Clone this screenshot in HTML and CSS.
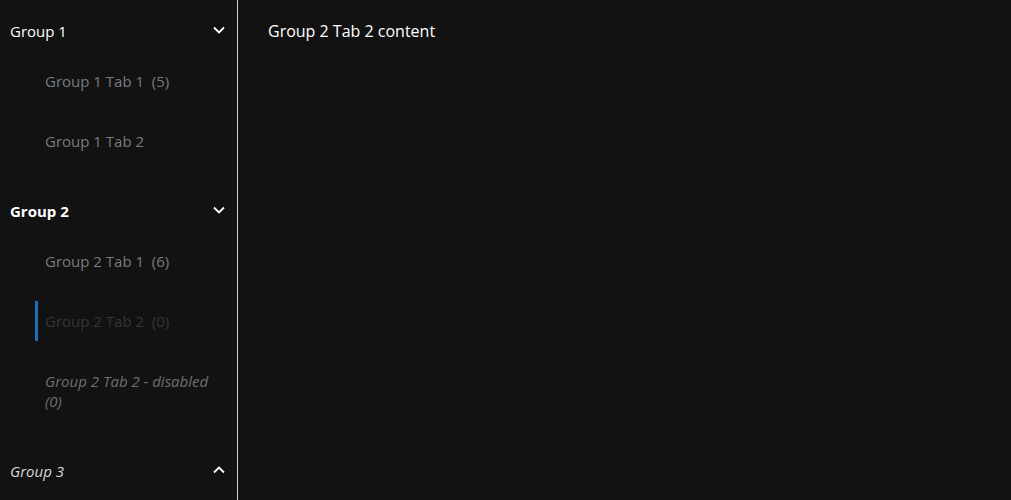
FILE: index.html
```html
<!DOCTYPE html>
<html>
<head>
<meta charset="utf-8">
<link rel="stylesheet" href="styles.css">
</head>
<body>
<div class="app">
  <nav class="sidebar">
    <section class="group">
      <div class="group-header">
        <span class="group-title">Group 1</span>
        <svg class="chev" width="12" height="8" viewBox="0 0 12 8"><path d="M1 1.5 L6 6.5 L11 1.5" fill="none" stroke="#fff" stroke-width="1.8"/></svg>
      </div>
      <div class="tab"><span>Group 1 Tab 1&nbsp; (5)</span></div>
      <div class="tab"><span>Group 1 Tab 2</span></div>
    </section>
    <section class="group">
      <div class="group-header">
        <span class="group-title bold">Group 2</span>
        <svg class="chev" width="12" height="8" viewBox="0 0 12 8"><path d="M1 1.5 L6 6.5 L11 1.5" fill="none" stroke="#fff" stroke-width="1.8"/></svg>
      </div>
      <div class="tab"><span>Group 2 Tab 1&nbsp; (6)</span></div>
      <div class="tab active"><span>Group 2 Tab 2&nbsp; (0)</span></div>
      <div class="tab disabled"><span>Group 2 Tab 2 - disabled (0)</span></div>
    </section>
    <section class="group">
      <div class="group-header">
        <span class="group-title italic">Group 3</span>
        <svg class="chev" width="12" height="8" viewBox="0 0 12 8"><path d="M1 6.5 L6 1.5 L11 6.5" fill="none" stroke="#fff" stroke-width="1.8"/></svg>
      </div>
    </section>
  </nav>
  <main class="content">Group 2 Tab 2 content</main>
</div>
</body>
</html>
```
FILE: styles.css
```css
html, body {
  margin: 0;
  padding: 0;
  background: #121212;
  height: 100%;
}
body {
  font-family: "Open Sans", "Noto Sans", sans-serif;
  font-size: 15px;
  color: #fff;
  overflow: hidden;
}
.app {
  display: flex;
  height: 500px;
}
.sidebar {
  width: 237px;
  border-right: 1px solid #cfcfcf;
  padding-top: 11px;
  flex: none;
}
.group {
  display: flex;
  flex-direction: column;
  padding-bottom: 20px;
}
.group-header {
  height: 40px;
  display: flex;
  align-items: center;
  justify-content: space-between;
  padding: 0 12px 0 10px;
}
.group-title {
  line-height: 20px;
}
.group-title.bold { font-weight: 700; }
.group-title.italic { font-style: italic; color: #d8d8d8; }
.chev { display: block; margin-top: -2px; }
.tab {
  margin: 10px 20px 10px 35px;
  min-height: 40px;
  padding: 10px 0 10px 10px;
  box-sizing: border-box;
  display: flex;
  align-items: center;
  line-height: 20px;
  color: #777b80;
}
.tab.active {
  border-left: 3px solid #1a6fb8;
  padding-left: 7px;
  color: #32353a;
}
.tab.disabled {
  font-style: italic;
  color: #6c7075;
}
.content {
  padding: 21px 0 0 30px;
  line-height: 20px;
  font-size: 16px;
}
```
